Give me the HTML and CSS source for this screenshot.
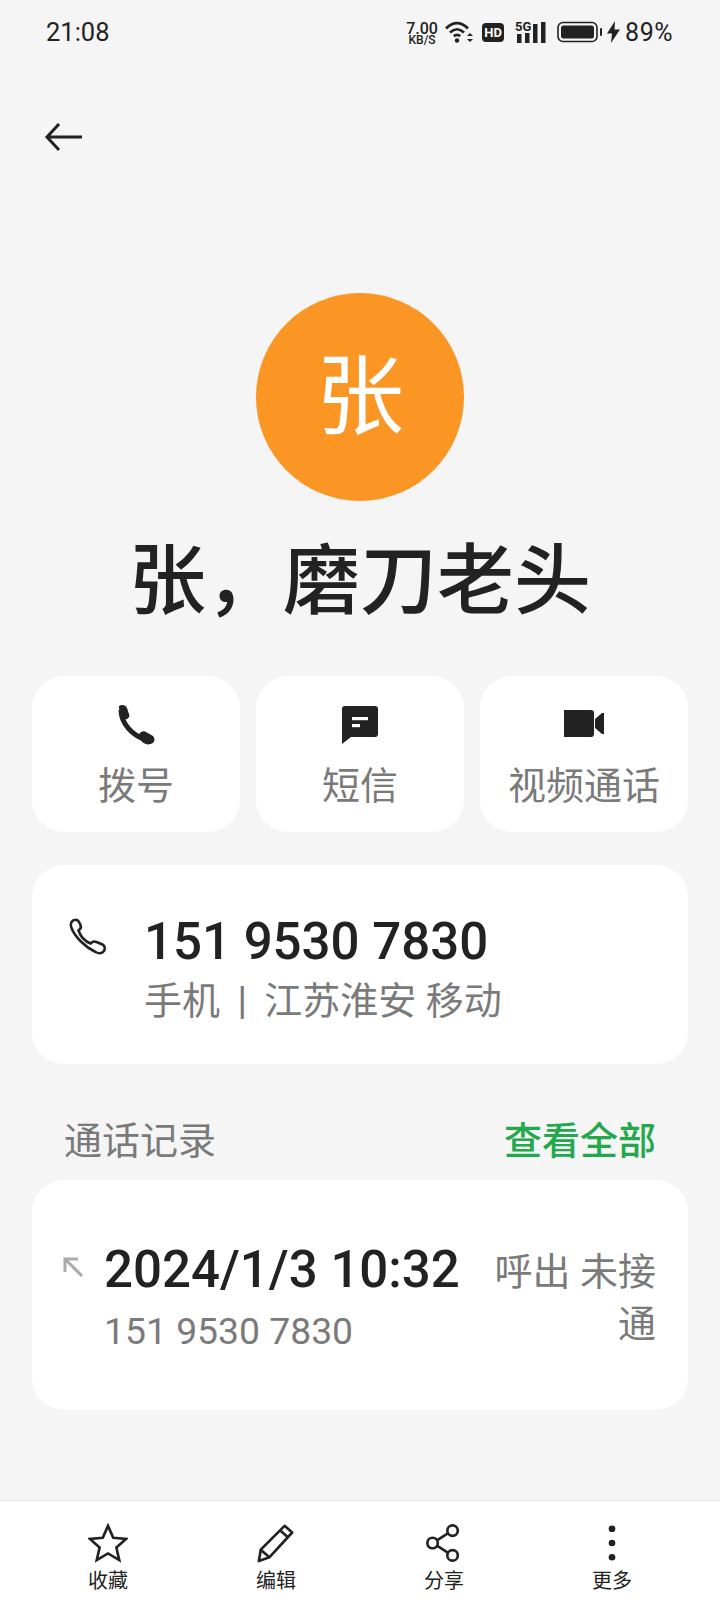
FILE: index.html
```html
<!DOCTYPE html>
<html lang="zh-CN">
<head>
    <meta charset="UTF-8">
    <meta name="viewport" content="width=device-width, initial-scale=1.0">
    <title>联系人详情</title>
    <link rel="stylesheet" href="styles.css">
</head>
<body>
    <div class="status-bar">
        <span class="clock">21:08</span>
        <div class="status-icons">
            <div class="net-speed"><span>7.00</span><span class="net-unit">KB/S</span></div>
            <svg class="wifi" width="29" height="24" viewBox="0 0 29 24">
                <path d="M1 8.500C8 1.500 16 1.500 23 8.500M5 12.500C10 8 14 8 19 12.500M8.800 16.200C11 14.400 13 14.400 15.200 16.200" fill="none" stroke="#222" stroke-width="2.800"/>
                <circle cx="12" cy="20.500" r="2.200" fill="#222"/>
                <path d="M25 13l-3 3h6zM25 22l-3-3h6z" fill="#222"/>
            </svg>
            <span class="hd-badge">HD</span>
            <div class="signal">
                <span class="signal-label">5G</span>
                <svg width="32" height="22" viewBox="0 0 32 22">
                    <rect x="2" y="13" width="4.500" height="9" fill="#222"/>
                    <rect x="10" y="12" width="4.500" height="10" fill="#222"/>
                    <rect x="18" y="3" width="4.500" height="19" fill="#222"/>
                    <rect x="26" y="1" width="4.500" height="21" fill="#222"/>
                </svg>
            </div>
            <svg class="battery" width="46" height="22" viewBox="0 0 46 22">
                <rect x="1" y="1.500" width="39" height="19" rx="5" fill="none" stroke="#222" stroke-width="1.600"/>
                <rect x="4" y="4.500" width="33" height="13" rx="2.500" fill="#222"/>
                <rect x="43" y="7" width="2" height="8" rx="1" fill="#222"/>
            </svg>
            <svg class="bolt" width="13" height="22" viewBox="0 0 13 22">
                <path d="M8 0L0 12.500h5L4 22l9-13.500H7.500z" fill="#222"/>
            </svg>
            <span class="battery-level">89%</span>
        </div>
    </div>

    <div class="nav-bar">
        <svg width="40" height="32" viewBox="0 0 40 32">
            <path d="M38 16H4M15 3L3 16l12 13" fill="none" stroke="#222" stroke-width="3"/>
        </svg>
    </div>

    <div class="profile">
        <div class="avatar">张</div>
        <h1 class="contact-name">张，磨刀老头</h1>
    </div>

    <div class="actions">
        <div class="action-card">
            <svg width="44" height="44" viewBox="0 0 44 44">
                <path d="M7 7c0 13 11 26 26 30" fill="none" stroke="#222" stroke-width="5"/>
                <path d="M5 3c3-2 7-1 8 2l2 6c1 2 0 4-2 5l-3 1c-3-3-5-7-5-14zM24 32l3-3c2-1 4-1 5 0l7 4c2 2 2 5 0 7-2 1-5 2-7 1-3-1-7-4-8-9z" fill="#222"/>
            </svg>
            <span class="action-label">拨号</span>
        </div>
        <div class="action-card">
            <svg width="44" height="44" viewBox="0 0 44 44">
                <path d="M4 6a3 3 0 0 1 3-3h30a3 3 0 0 1 3 3v25a3 3 0 0 1-3 3H13l-9 7z" fill="#222"/>
                <rect x="14" y="14" width="16" height="3.200" fill="#fff"/>
                <rect x="14" y="21" width="8" height="3.200" fill="#fff"/>
            </svg>
            <span class="action-label">短信</span>
        </div>
        <div class="action-card">
            <svg width="44" height="44" viewBox="0 0 44 44">
                <path d="M2 7h27a3 3 0 0 1 3 3v21a3 3 0 0 1-3 3H2z" fill="#222"/>
                <path d="M33 16l7-6h2v21h-2l-7-6z" fill="#222"/>
            </svg>
            <span class="action-label">视频通话</span>
        </div>
    </div>

    <div class="card phone-card">
        <svg class="phone-icon" width="40" height="40" viewBox="0 0 40 40">
            <path d="M3.500 5c2-3 6-3 7.500 0l1.500 3c1 2 0 4-2 5.500 2 6 7 11 12 13 2-2 4-2.500 6-1.500l6 2.500c3 1.500 3 5.500 .5 7.500-2 1.500-5 1.500-7.500 0C17 30 7 20 3.500 11c-1-2-1-4 0-6z" fill="none" stroke="#222" stroke-width="2.600"/>
        </svg>
        <div class="phone-info">
            <div class="phone-number">151 9530 7830</div>
            <div class="phone-meta">手机 <span class="meta-sep">|</span> 江苏淮安 移动</div>
        </div>
    </div>

    <div class="section-head">
        <span class="section-title">通话记录</span>
        <span class="section-link">查看全部</span>
    </div>

    <div class="card call-card">
        <svg class="call-arrow" width="22" height="22" viewBox="0 0 22 22">
            <path d="M20 20L3 3M3 16V3h13" fill="none" stroke="#aaa" stroke-width="3"/>
        </svg>
        <div class="call-info">
            <div class="call-time">2024/1/3 10:32</div>
            <div class="call-number">151 9530 7830</div>
        </div>
        <div class="call-status">呼出 未接通</div>
    </div>

    <div class="toolbar">
        <div class="tool">
            <svg width="40" height="40" viewBox="0 0 42 42">
                <path d="M21 3l5.500 12.500 13.500 1.300-10.200 9 3 13.200L21 32l-11.800 7 3-13.200-10.200-9 13.500-1.300z" fill="none" stroke="#222" stroke-width="2.800"/>
            </svg>
            <span class="tool-label">收藏</span>
        </div>
        <div class="tool">
            <svg width="40" height="40" viewBox="0 0 42 42">
                <path d="M30 3l8 7L14 36 3 40l2-12zM25.500 8l8 7M5 28l9 8" fill="none" stroke="#222" stroke-width="2.800" stroke-linejoin="round"/>
            </svg>
            <span class="tool-label">编辑</span>
        </div>
        <div class="tool">
            <svg width="40" height="40" viewBox="0 0 42 42">
                <circle cx="30" cy="8" r="5.500" fill="none" stroke="#222" stroke-width="2.800"/>
                <circle cx="9" cy="21" r="5.500" fill="none" stroke="#222" stroke-width="2.800"/>
                <circle cx="30" cy="34" r="5.500" fill="none" stroke="#222" stroke-width="2.800"/>
                <path d="M14 18l11-7M14 24l11 7" fill="none" stroke="#222" stroke-width="2.800"/>
            </svg>
            <span class="tool-label">分享</span>
        </div>
        <div class="tool">
            <svg width="40" height="40" viewBox="0 0 42 42">
                <circle cx="21" cy="6" r="3.500" fill="#222"/>
                <circle cx="21" cy="21" r="3.500" fill="#222"/>
                <circle cx="21" cy="36" r="3.500" fill="#222"/>
            </svg>
            <span class="tool-label">更多</span>
        </div>
    </div>
</body>
</html>
```

FILE: styles.css
```css
html, body {
    margin: 0;
    padding: 0;
}
body {
    width: 720px;
    height: 1612px;
    overflow: hidden;
    display: flex;
    flex-direction: column;
    background-color: #f5f5f5;
    color: #222;
    font-family: Roboto, "Noto Sans CJK SC", sans-serif;
}
.status-bar {
    height: 64px;
    padding: 0 46px;
    display: flex;
    align-items: center;
    justify-content: space-between;
    flex-shrink: 0;
}
.clock {
    font-size: 25.500px;
}
.status-icons {
    display: flex;
    align-items: center;
    margin-right: 1px;
}
.net-speed {
    display: flex;
    flex-direction: column;
    align-items: center;
    padding-top: 2px;
    font-size: 16px;
    line-height: 13px;
    font-weight: 500;
    width: 32px;
}
.net-unit {
    font-size: 12px;
    line-height: 10px;
}
.wifi {
    margin-left: 7px;
}
.hd-badge {
    margin-left: 8px;
    width: 22px;
    height: 19px;
    border-radius: 4px;
    background-color: #222;
    color: #fff;
    font-size: 13px;
    font-weight: 700;
    line-height: 19px;
    text-align: center;
}
.signal {
    margin-left: 11px;
    position: relative;
    height: 22px;
}
.signal-label {
    position: absolute;
    left: 0;
    top: 0;
    font-size: 13px;
    line-height: 11px;
    font-weight: 700;
}
.battery {
    margin-left: 10px;
}
.bolt {
    margin-left: 4px;
}
.battery-level {
    margin-left: 5px;
    font-size: 25px;
    letter-spacing: 0.500px;
}
.nav-bar {
    height: 60px;
    margin-top: 43px;
    padding-left: 44px;
    display: flex;
    align-items: center;
    flex-shrink: 0;
}
.profile {
    display: flex;
    flex-direction: column;
    align-items: center;
    margin-top: 126px;
}
.avatar {
    width: 208px;
    height: 208px;
    border-radius: 50%;
    background-color: #fb9624;
    color: #fff;
    font-size: 88px;
    line-height: 208px;
    text-align: center;
}
.contact-name {
    margin: 26px 0 0;
    font-size: 77px;
    line-height: 110px;
    font-weight: 500;
    color: #222;
}
.actions {
    display: flex;
    gap: 16px;
    margin: 39px 32px 0;
}
.action-card {
    flex: 1;
    height: 156px;
    background-color: #fff;
    border-radius: 32px;
    display: flex;
    flex-direction: column;
    align-items: center;
    padding-top: 27px;
    box-sizing: border-box;
}
.action-label {
    margin-top: 13px;
    font-size: 38px;
    line-height: 52px;
    color: #7a7a7a;
}
.card {
    margin: 0 32px;
    background-color: #fff;
    border-radius: 32px;
    display: flex;
}
.phone-card {
    margin-top: 33px;
    height: 199px;
    padding: 47px 0 0 36px;
    box-sizing: border-box;
}
.phone-icon {
    margin-top: 5px;
}
.phone-info {
    margin-left: 36px;
}
.phone-number {
    font-size: 51px;
    line-height: 60px;
    font-weight: 500;
}
.phone-meta {
    margin-top: 3px;
    font-size: 38px;
    line-height: 52px;
    color: #7a7a7a;
}
.meta-sep {
    padding: 0 8px;
    font-size: 38px;
    font-weight: 500;
}
.section-head {
    display: flex;
    justify-content: space-between;
    align-items: center;
    margin: 46px 32px 0;
    padding: 0 32px;
    height: 54px;
}
.section-title {
    font-size: 38px;
    color: #7a7a7a;
}
.section-link {
    font-size: 38px;
    font-weight: 500;
    color: #23a84e;
}
.call-card {
    margin-top: 16px;
    height: 230px;
    padding: 60px 32px 0 30px;
    box-sizing: border-box;
}
.call-arrow {
    margin-top: 16px;
}
.call-info {
    margin-left: 20px;
    flex-shrink: 0;
}
.call-time {
    font-size: 51px;
    line-height: 60px;
    font-weight: 500;
}
.call-number {
    margin-top: 1px;
    font-size: 37.300px;
    line-height: 60px;
    color: #7a7a7a;
}
.call-status {
    flex: 1;
    margin-left: 24px;
    padding-top: 6px;
    font-size: 38px;
    line-height: 52px;
    color: #7a7a7a;
    text-align: right;
}
.toolbar {
    margin-top: auto;
    height: 112px;
    padding: 22px 24px 0;
    box-sizing: border-box;
    background-color: #fff;
    border-top: 1px solid #e4e4e4;
    display: flex;
}
.tool {
    flex: 1;
    display: flex;
    flex-direction: column;
    align-items: center;
}
.tool-label {
    margin-top: 3px;
    font-size: 20px;
    line-height: 30px;
}
```
